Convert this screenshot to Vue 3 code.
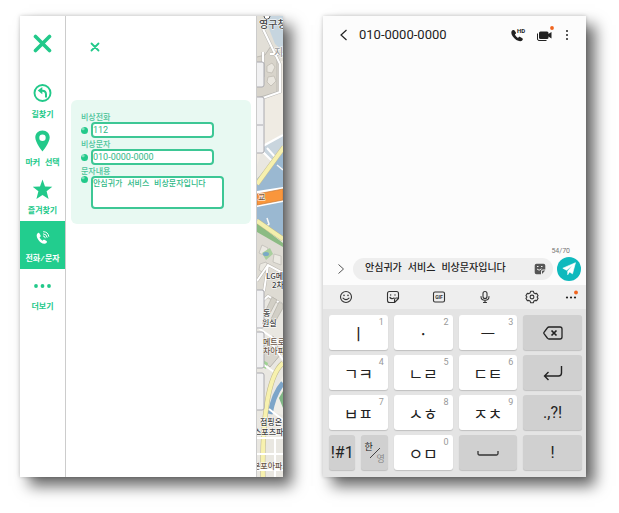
<script setup>
import { ref } from 'vue'

const navItems = [
  { id: 'route', label: '길찾기' },
  { id: 'marker', label: '마커 선택' },
  { id: 'star', label: '즐겨찾기' },
  { id: 'call', label: '전화/문자' },
  { id: 'more', label: '더보기' },
]
const active = ref('call')

const phone = ref('112')
const smsNumber = ref('010-0000-0000')
const message = ref('안심귀가 서비스 비상문자입니다')
const draft = ref('안심귀가 서비스 비상문자입니다')

const tools = ['smile', 'sticker', 'gif', 'mic', 'gear', 'dots']
const keys = [
  { main: 'ㅣ', num: '1' },
  { main: '·', num: '2' },
  { main: 'ㅡ', num: '3' },
  { icon: 'back', dark: true },
  { main: 'ㄱㅋ', num: '4' },
  { main: 'ㄴㄹ', num: '5' },
  { main: 'ㄷㅌ', num: '6' },
  { icon: 'enter', dark: true },
  { main: 'ㅂㅍ', num: '7' },
  { main: 'ㅅㅎ', num: '8' },
  { main: 'ㅈㅊ', num: '9' },
  { main: '.,?!', dark: true, latin: true },
  { pair: true },
  { main: 'ㅇㅁ', num: '0' },
  { icon: 'space', dark: true },
  { main: '!', dark: true, latin: true },
]
</script>

<template>
  <main class="board">
    <section class="phone map-app">
      <nav class="side">
        <button class="close" aria-label="닫기">
          <svg width="19" height="19" viewBox="0 0 19 19"><path d="M2.500 2.500L16.500 16.500M16.500 2.500L2.500 16.500" stroke="currentColor" stroke-width="3.600" stroke-linecap="round" /></svg>
        </button>
        <button
          v-for="item in navItems"
          :key="item.id"
          class="nav-item"
          :class="{ active: active === item.id }"
          @click="active = item.id"
        >
          <svg v-if="item.id === 'route'" width="20" height="22" viewBox="0 0 20 22" fill="none" stroke="currentColor">
            <circle cx="9.500" cy="11" r="8" stroke-width="1.900" />
            <path d="M13 15.500V12.500Q13 8.700 9.500 8.700H7" stroke-width="2" />
            <path d="M9.300 5L4.700 8.600L9.300 12.200Z" fill="currentColor" stroke="none" />
          </svg>
          <svg v-else-if="item.id === 'marker'" width="20" height="22" viewBox="0 0 20 22">
            <path fill="currentColor" fill-rule="evenodd" d="M9.500 .5C5.300 .5 2.300 3.500 2.300 7.500C2.300 12.500 9.500 21.500 9.500 21.500S16.700 12.500 16.700 7.500C16.700 3.500 13.700 .5 9.500 .5ZM9.500 4.500A3.200 3.200 0 1 1 9.500 10.900A3.200 3.200 0 0 1 9.500 4.500Z" />
          </svg>
          <svg v-else-if="item.id === 'star'" width="20" height="22" viewBox="0 0 20 22">
            <path fill="currentColor" d="M9.500 1.500L12 8.500L19.300 8.800L13.600 13.200L15.600 20.900L9.500 16.900L3.400 20.900L5.400 13.200L-.3 8.800L7 8.500Z" />
          </svg>
          <svg v-else-if="item.id === 'call'" width="20" height="22" viewBox="0 0 20 22">
            <path fill="currentColor" d="M5 6.900C3.200 8 3.400 10.400 4.800 12.900C6.500 15.900 9 17.900 11.700 17.800C12.700 17.700 13.600 17 13.900 16.300C14.100 15.800 13.900 15.400 13.500 15.100L11.500 13.800C11 13.500 10.500 13.600 10.100 14.100L9.600 14.700C8.200 13.900 7.100 12.600 6.600 11.300L7.400 10.700C7.800 10.300 7.800 9.900 7.600 9.400L6.400 7.300C6.100 6.800 5.600 6.600 5 6.900Z" />
            <path fill="none" stroke="currentColor" stroke-width="1" d="M10 9.900Q12 10 12.300 12.200M10 7.800Q13.700 8 14.200 11.700M10.200 5.700Q15.200 5.800 15.800 10.700" />
          </svg>
          <svg v-else width="20" height="22" viewBox="0 0 20 22" fill="currentColor">
            <circle cx="3" cy="12" r="1.900" /><circle cx="9.500" cy="12" r="1.900" /><circle cx="16" cy="12" r="1.900" />
          </svg>
          <span>{{ item.label }}</span>
        </button>
      </nav>

      <div class="panel">
        <button class="panel-close" aria-label="패널 닫기">
          <svg width="10" height="10" viewBox="0 0 10 10"><path d="M1.500 1.500L8.500 8.500M8.500 1.500L1.500 8.500" stroke="currentColor" stroke-width="1.800" stroke-linecap="round" /></svg>
        </button>
        <form class="card" @submit.prevent>
          <div class="field">
            <label for="phone">비상전화</label>
            <div class="line"><i class="bullet"></i><input id="phone" v-model="phone" type="text" /></div>
          </div>
          <div class="field">
            <label for="sms">비상문자</label>
            <div class="line"><i class="bullet"></i><input id="sms" v-model="smsNumber" type="text" /></div>
          </div>
          <div class="field">
            <label for="body">문자내용</label>
            <div class="line top"><i class="bullet"></i><textarea id="body" v-model="message"></textarea></div>
          </div>
        </form>
      </div>

      <div class="map">
        <svg viewBox="0 0 26 461" preserveAspectRatio="xMinYMin slice">
          <rect width="26" height="461" fill="#e9e7e1" />
          <path d="M0 0H26V78L0 90Z" fill="#e2dfd7" />
          <path d="M7 0H26V35L18 28Z" fill="#c6d5df" />
          <path d="M7 82L26 73V120L7 132Z" fill="#efebe3" />
          <path d="M0 83L22 77V45H26V118L8 125L0 150Z" fill="#efebe3" />
          <path d="M4 131L26 118V131L14 146Z" fill="#c9d5de" />
          <path d="M0 163L26 133V222L0 203Z" fill="#9ab8d1" />
          <path d="M0 41L8 39L14 30L20 42V76L0 82" fill="#d8d4cb" stroke="#bdbab3" />
          <path d="M10 50l5-3 3 4-3 6-5-1zM11 61l6-1 2 5-5 5-4-4z" fill="#eae7e0" stroke="#bbb7af" stroke-width=".7" />
          <path d="M6 13L23 48V76L0 84M13 38H26M6 36V61" fill="none" stroke="#b9b8b5" stroke-width="3" />
          <path d="M6 13L23 48V76L0 84M13 38H26M6 36V61" fill="none" stroke="#fff" stroke-width="2" />
          <path d="M6 130L26 119M6 136L16 146M10 132L19 142" fill="none" stroke="#fff" stroke-width="2" />
          <path d="M0 168L27 131" stroke="#c4bd94" stroke-width="5" />
          <path d="M0 168L27 131" stroke="#f6f0ae" stroke-width="4" />
          <path d="M20 149L26 154M3 216L12 208L10 202" stroke="#f7f7f7" stroke-width="1.500" fill="none" />
          <path d="M0 175L26 171V186L0 191Z" fill="#fff" />
          <path d="M0 178L26 173V184L0 189Z" fill="#f9963c" stroke="#c87933" stroke-width=".7" />
          <path d="M0 207L26 227V238L0 222Z" fill="#8bbb83" />
          <path d="M0 205L26 223" stroke="#c1b782" stroke-width="5" />
          <path d="M0 205L26 223" stroke="#f3efad" stroke-width="4" />
          <path d="M0 216L26 231V290L0 278Z" fill="#dedbd3" />
          <path d="M5 229l6 3-2 8-7-3zM17 238l7 2v9l-8-3zM3 248l6-2 3 5-5 6-5-3z" fill="#ebe9e2" stroke="#bbb9b3" stroke-width=".7" />
          <path d="M5 237L13 232L16 238L9 244Z" fill="#a9cf9e" /><ellipse cx="9" cy="238" rx="3" ry="2" fill="#7aa9c7" />
          <path d="M0 265L11 249L26 257M0 290L11 280L26 289M11 249L7 275" fill="none" stroke="#b8b5ae" stroke-width="3" />
          <path d="M0 265L11 249L26 257M0 290L11 280L26 289M11 249L7 275" fill="none" stroke="#fff" stroke-width="2" />
          <path d="M15 281l5 3-9 17-4-3zM22 286l4 2v4l-8 14-4-3z" fill="#d2cfc6" stroke="#b3b0a8" stroke-width=".7" />
          <path d="M5 326L16 320L24 338L13 351L3 342Z" fill="#d8d5cd" stroke="#b8b5ae" />
          <path d="M6 344L11 347L9 353L5 351Z" fill="#9ed492" />
          <path d="M0 311L26 329M0 344L17 356M13 325L26 344" stroke="#fff" stroke-width="2" />
          <path d="M26 360Q18 373 13 395L26 399Z" fill="#f0eee8" />
          <path d="M26 367Q17 377 13 398" fill="none" stroke="#7da5c9" stroke-width="5" />
          <path d="M22 382L26 375V392Z" fill="#7fb584" />
          <path d="M26 347Q15 356 10 387T6 461" fill="none" stroke="#bfb78b" stroke-width="5" />
          <path d="M26 347Q15 356 10 387T6 461" fill="none" stroke="#f7f1ae" stroke-width="4" />
          <path d="M12 393L26 404M0 422H26M0 438H26M18 422V461M0 454H26" fill="none" stroke="#fff" stroke-width="2" />
          <g fill="#f1f1f2" stroke="#aaaab0" stroke-width="1">
            <rect x="-5" y="46" width="12" height="25" rx="2" /><rect x="-5" y="81" width="12" height="56" rx="2" />
            <rect x="-5" y="274" width="12" height="38" rx="2" /><rect x="-5" y="316" width="12" height="36" rx="2" /><rect x="-5" y="357" width="12" height="37" rx="2" />
            <path d="M0 109H6" />
          </g>
          <circle cx="10" cy="0" r="3" fill="#fff" stroke="#555" />
          <g class="places">
            <text x="2" y="12" class="big">영구청</text>
            <text x="17" y="40" class="faint">지</text>
            <text x="1" y="184" class="light">교</text>
            <text x="9" y="263">LG메</text><text x="15" y="272">2차</text>
            <text x="6" y="300">동</text><text x="5" y="310">원실</text>
            <text x="6" y="329" class="brown">메트로</text><text x="6" y="338" class="brown">차아파</text>
            <text x="3" y="409">점핑온</text><text x="-3" y="419">스포츠파크</text>
            <text x="-4" y="453" class="brown">본포아파트</text>
          </g>
        </svg>
      </div>
    </section>

    <section class="phone sms-app">
      <header class="top-bar">
        <button aria-label="뒤로"><svg width="10" height="14" viewBox="0 0 10 14"><path d="M7.500 2L2 7L7.500 12" fill="none" stroke="#222" stroke-width="1.200" /></svg></button>
        <h1>010-0000-0000</h1>
        <div class="actions">
          <button aria-label="전화">
            <svg width="16" height="16" viewBox="0 0 16 16">
              <path fill="#222" d="M2.500 3.200C.6 4.500 1.300 7.200 3 9.800C5 12.500 7.800 14.300 10.300 14.200C11.500 14.100 12.600 13.200 12.800 12.400C12.900 12 12.700 11.600 12.300 11.300L10.200 9.900C9.700 9.600 9.200 9.700 8.800 10.100L8 11C6.800 10.300 5.500 8.900 4.900 7.600L5.700 6.800C6.100 6.400 6.100 6 5.900 5.500L4.600 3.500C4.100 2.800 3.300 2.700 2.500 3.200Z" />
              <text x="7" y="6" class="hd">HD</text>
            </svg>
          </button>
          <button aria-label="영상 통화">
            <svg width="18" height="18" viewBox="0 0 18 18">
              <rect x="3" y="5.500" width="9.500" height="7.500" rx="1.500" fill="#222" /><path d="M11.500 8.500L15.500 6V12.500L11.500 10Z" fill="#222" />
              <path d="M1.500 7.500V13Q1.500 14.500 3 14.500H10.500" fill="none" stroke="#222" stroke-width="1" />
              <circle cx="16" cy="2" r="1.900" fill="#f0641e" />
            </svg>
          </button>
          <button aria-label="더보기"><svg width="6" height="12" viewBox="0 0 6 12" fill="#222"><circle cx="3" cy="2" r="1" /><circle cx="3" cy="6" r="1" /><circle cx="3" cy="10" r="1" /></svg></button>
        </div>
      </header>

      <div class="thread"></div>
      <p class="counter">54/70</p>

      <form class="compose" @submit.prevent>
        <button type="button" class="expand" aria-label="펼치기"><svg width="8" height="12" viewBox="0 0 8 12"><path d="M1.500 1.500L6.500 6L1.500 10.500" fill="none" stroke="#555" /></svg></button>
        <div class="pill">
          <input v-model="draft" type="text" aria-label="메시지" />
          <button type="button" aria-label="스티커">
            <svg width="12" height="12" viewBox="0 0 12 12"><path d="M2.500 .7H9.500Q11.300 .7 11.300 2.500V6.500H9Q7 6.500 7 8.500V11.300H2.500Q.7 11.300 .7 9.500V2.500Q.7 .7 2.500 .7ZM8 11V8.500Q8 7.500 9 7.500H11.200Z" fill="#555" /><path d="M3 3.500H4.500M7 3.500H8.500M3 6Q5 8.500 7.500 5.800" stroke="#eee" fill="none" /></svg>
          </button>
        </div>
        <button class="send" aria-label="보내기"><svg width="14" height="14" viewBox="0 0 14 14"><path d="M13.500 .7L.8 6.200L4.500 8.200L10.800 3.300L5.700 9V12.800L7.500 10L10.500 11.800Z" fill="#fff" stroke="#fff" stroke-width=".6" stroke-linejoin="round" /></svg></button>
      </form>

      <div class="tools">
        <button v-for="tool in tools" :key="tool" :aria-label="tool">
          <svg width="14" height="14" viewBox="0 0 14 14" fill="none" stroke="#333" stroke-width="1.100" stroke-linecap="round" stroke-linejoin="round">
            <template v-if="tool === 'smile'">
              <circle cx="7" cy="7" r="5.500" /><path d="M4 8.200Q7 11.200 10 8.200" /><path d="M5 5.200V5.500M9 5.200V5.500" stroke-width="1.500" />
            </template>
            <template v-else-if="tool === 'sticker'">
              <path d="M3.500 1.500H10.500Q12.500 1.500 12.500 3.500V8.500L8.500 12.500H3.500Q1.500 12.500 1.500 10.500V3.500Q1.500 1.500 3.500 1.500ZM12.500 8H10Q8.500 8 8.500 10V12.300" /><path d="M4 7.500Q5.500 9.500 8 8M4.700 4.800V5M9 4.800V5" stroke-width="1.300" />
            </template>
            <template v-else-if="tool === 'gif'">
              <rect x="1.500" y="2" width="11" height="10" rx="1.500" /><text x="7" y="9" class="gif">GIF</text>
            </template>
            <template v-else-if="tool === 'mic'">
              <rect x="5" y="1.500" width="4" height="7" rx="2" /><path d="M3 6.500Q3 10.300 7 10.300T11 6.500M7 10.500V12.500M5.500 12.500H8.500" />
            </template>
            <template v-else-if="tool === 'gear'">
              <path d="M5.700 1.300H8.300L8.900 2.900L10.100 3.600L11.800 3.400L13.100 5.700L12 7L13.100 8.300L11.800 10.600L10.100 10.400L8.900 11.100L8.300 12.700H5.700L5.100 11.100L3.900 10.400L2.200 10.600L.9 8.300L2 7L.9 5.700L2.200 3.400L3.900 3.600L5.100 2.900Z" /><circle cx="7" cy="7" r="1.900" />
            </template>
            <template v-else>
              <g fill="#222" stroke="none"><circle cx="3" cy="7.500" r="1.100" /><circle cx="7" cy="7.500" r="1.100" /><circle cx="11" cy="7.500" r="1.100" /><circle cx="12" cy="2.500" r="1.900" fill="#f0641e" /></g>
            </template>
          </svg>
        </button>
      </div>

      <div class="keyboard">
        <template v-for="(key, index) in keys" :key="index">
          <div v-if="key.pair" class="key-pair">
            <button class="key dark latin">!#1</button>
            <button class="key dark lang">
              <span>한</span>
              <svg width="12" height="12" viewBox="0 0 12 12"><path d="M1 11L11 1" stroke="#444" /></svg>
              <span class="muted">영</span>
            </button>
          </div>
          <button v-else class="key" :class="{ dark: key.dark, latin: key.latin }" :aria-label="key.icon">
            <template v-if="key.main">{{ key.main }}</template>
            <small v-if="key.num">{{ key.num }}</small>
            <svg v-if="key.icon === 'back'" width="22" height="16" viewBox="0 0 22 16" fill="none" stroke="#222" stroke-width="1.300" stroke-linejoin="round"><path d="M7 2H18Q20 2 20 4V12Q20 14 18 14H7Q6 14 5.300 13L2 8.700Q1.500 8 2 7.300L5.300 3Q6 2 7 2Z" /><path d="M9.500 5.500L14.500 10.500M14.500 5.500L9.500 10.500" stroke-width="1.700" /></svg>
            <svg v-if="key.icon === 'enter'" width="22" height="18" viewBox="0 0 22 18" fill="none" stroke="#222" stroke-width="1.400"><path d="M19.500 2V9Q19.500 12 16.500 12H2.500M6.500 8L2.500 12L6.500 16" /></svg>
            <svg v-if="key.icon === 'space'" width="22" height="8" viewBox="0 0 22 8" fill="none" stroke="#333" stroke-width="1.300"><path d="M1 2V4.500Q1 6 2.500 6H19.500Q21 6 21 4.500V2" /></svg>
          </button>
        </template>
      </div>
    </section>
  </main>
</template>

<style>
body {
  margin: 0;
  background: #fff;
}
</style>

<style scoped>
.board {
  display: grid;
  grid-template-columns: 1fr 1fr;
  gap: 40px;
  padding: 16px 33px 36px 20px;
  font-family: Roboto, "Noto Sans CJK KR", sans-serif;
}
.board * {
  box-sizing: border-box;
}
button {
  display: flex;
  align-items: center;
  justify-content: center;
  margin: 0;
  padding: 0;
  border: 0;
  background: none;
  color: inherit;
  font: inherit;
}
svg {
  display: block;
  flex: none;
}
.phone {
  min-width: 0;
  display: flex;
  background: #fff;
  box-shadow: 0 0 4px rgba(0, 0, 0, 0.2), 9px 9px 14px rgba(0, 0, 0, 0.6);
}

.map-app {
  color: #22c98a;
}
.side {
  width: 46px;
  border-right: 1px solid #ccc;
}
.close {
  width: 100%;
  height: 61px;
  padding-bottom: 7px;
}
.nav-item {
  flex-direction: column;
  justify-content: flex-start;
  gap: 5px;
  width: 100%;
  height: 48px;
  padding-top: 5px;
  font: 700 8px/12px "Liberation Mono", "Noto Sans CJK KR", monospace;
  white-space: nowrap;
}
.nav-item.active {
  background: #22cd8e;
  color: #fff;
}
.panel {
  flex: 1;
  min-width: 0;
  padding: 26px 5px 0 5px;
  border-right: 1px solid #ccc;
}
.panel-close {
  margin-left: 19px;
}
.card {
  display: flex;
  flex-direction: column;
  gap: 1px;
  margin-top: 48px;
  padding: 12px 10px 15px;
  border-radius: 6px;
  background: #e8f9f2;
}
.field label {
  display: block;
  font: 500 8px/10px "Noto Sans CJK KR", sans-serif;
  color: #4cc49a;
}
.line {
  display: flex;
  align-items: center;
  gap: 3px;
}
.line.top {
  align-items: flex-start;
}
.bullet {
  width: 7px;
  height: 7px;
  border-radius: 50%;
  background: radial-gradient(circle at 30% 25%, #7fdfba 0 1px, #22c98a 2px);
}
.line input,
.line textarea {
  display: block;
  min-width: 0;
  margin: 0;
  padding: 0;
  border: 2px solid #3dc795;
  border-radius: 4px;
  outline: 0;
  background: #fff;
  color: #2fb987;
}
.line input {
  width: 77%;
  height: 16px;
  font: 9px/12px Roboto, sans-serif;
}
.line textarea {
  width: 83%;
  height: 33px;
  font: 500 8px/12px "Liberation Mono", "Noto Sans CJK KR", monospace;
  resize: none;
  overflow: hidden;
}
.map {
  width: 26px;
  overflow: hidden;
}
.map svg {
  width: 100%;
  height: 100%;
}
.places {
  font: 500 8px "Noto Sans CJK KR", sans-serif;
  fill: #444;
  stroke: #fff;
  stroke-width: 1px;
  paint-order: stroke;
}
.places .big {
  font-size: 10px;
}
.places .faint {
  font-size: 10px;
  fill: #999;
}
.places .light {
  fill: #7d5a3c;
}
.places .brown {
  fill: #6b5648;
}

.sms-app {
  flex-direction: column;
  background: #fcfcfc;
  color: #222;
}
.top-bar {
  display: flex;
  align-items: center;
  height: 38px;
  padding: 0 16px;
}
.top-bar h1 {
  flex: 1;
  margin: 0 0 0 10px;
  font-size: 13px;
  font-weight: 400;
  line-height: 18px;
}
.actions {
  display: flex;
  align-items: center;
  gap: 10px;
}
.hd {
  font: 700 6px Roboto, sans-serif;
  fill: #222;
}
.thread {
  min-height: 193px;
  flex: 1;
}
.counter {
  margin: 0;
  padding-right: 16px;
  font-size: 7px;
  line-height: 9px;
  text-align: right;
  color: #777;
}
.compose {
  display: flex;
  align-items: center;
  height: 29px;
  padding: 0 5px 4px 14px;
}
.expand {
  width: 8px;
  margin-right: 8px;
}
.pill {
  flex: 1;
  min-width: 0;
  display: flex;
  align-items: center;
  height: 22px;
  margin-right: 4px;
  padding: 0 7px 0 12px;
  border-radius: 11px;
  background: #eee;
}
.pill input {
  flex: 1;
  min-width: 0;
  height: 18px;
  padding: 0;
  border: 0;
  outline: 0;
  background: transparent;
  color: #222;
  font: 500 10px/18px "Liberation Mono", "Noto Sans CJK KR", sans-serif;
}
.send {
  width: 24px;
  height: 24px;
  border-radius: 50%;
  background: #0fb9bd;
}
.tools {
  display: grid;
  grid-template-columns: repeat(5, 3fr) 2fr;
  height: 24px;
  background: #eee;
}
.gif {
  font: 700 5px Roboto, sans-serif;
  text-anchor: middle;
  fill: #333;
  stroke: none;
}
.keyboard {
  display: grid;
  grid-template-columns: repeat(4, 1fr);
  grid-auto-rows: 35px;
  gap: 5px 6px;
  padding: 6px 4px 7px 6px;
  background: #e4e4e4;
}
.key {
  position: relative;
  min-width: 0;
  border-radius: 3px;
  background: #fff;
  box-shadow: 0 1px 1px rgba(0, 0, 0, 0.16);
  font: 400 16px/20px "Noto Sans CJK KR", sans-serif;
}
.key.dark {
  background: #d0d0d0;
}
.key.latin {
  font: 400 16px/20px Roboto, sans-serif;
}
.key small {
  position: absolute;
  top: 2px;
  right: 4px;
  font: 400 9px/10px Roboto, sans-serif;
  color: #999;
}
.key-pair {
  display: grid;
  grid-template-columns: 1fr 1fr;
  gap: 6px;
}
.key.lang {
  display: grid;
  grid-template-columns: 12px 12px;
  grid-template-rows: 12px 12px;
  place-content: center;
  font-size: 9px;
  line-height: 12px;
}
.key.lang svg {
  grid-area: 1 / 1 / 3 / 3;
  place-self: center;
}
.key.lang span {
  grid-area: 1 / 1;
}
.key.lang .muted {
  grid-area: 2 / 2;
  color: #888;
}
</style>
